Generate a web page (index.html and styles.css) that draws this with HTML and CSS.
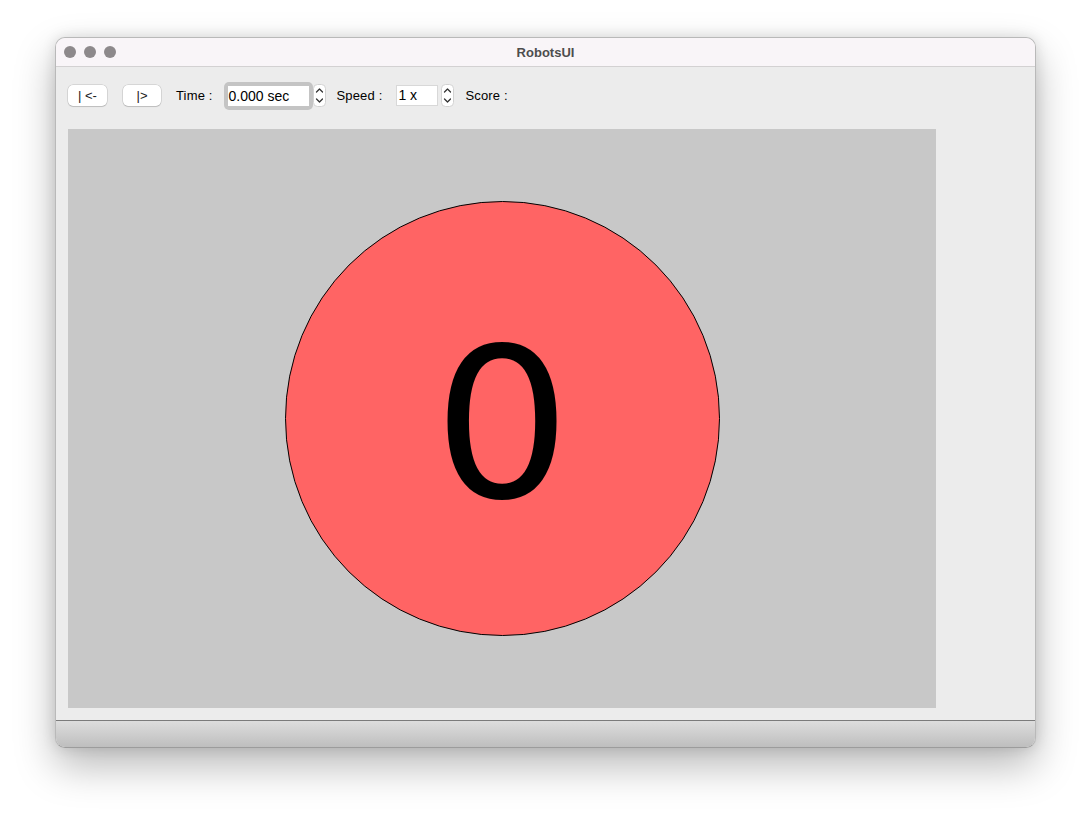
FILE: index.html
```html
<!DOCTYPE html>
<html>
<head>
<meta charset="utf-8">
<title>RobotsUI</title>
<link rel="stylesheet" href="styles.css">
</head>
<body>
<div class="window">
  <div class="titlebar">
    <div class="lights"><span class="light"></span><span class="light"></span><span class="light"></span></div>
    <div class="title">RobotsUI</div>
  </div>
  <div class="content">
    <div class="toolbar">
      <button class="btn btn-back">| &lt;-</button>
      <button class="btn btn-play">|&gt;</button>
      <span class="label label-time">Time :</span>
      <div class="focus-ring"><div class="field field-time">0.000 sec</div></div>
      <svg class="stepper" width="13" height="23" viewBox="0 0 13 23">
        <rect x="0.5" y="0.5" width="12" height="22" rx="4" fill="#fff" stroke="#d2d2d2"/>
        <path d="M3.5 8 L6.5 5 L9.5 8" fill="none" stroke="#333" stroke-width="1.3" stroke-linecap="round" stroke-linejoin="round"/>
        <path d="M3.5 15 L6.5 18 L9.5 15" fill="none" stroke="#333" stroke-width="1.3" stroke-linecap="round" stroke-linejoin="round"/>
      </svg>
      <span class="label label-speed">Speed :</span>
      <div class="field field-speed">1 x</div>
      <svg class="stepper stepper-speed" width="13" height="23" viewBox="0 0 13 23">
        <rect x="0.5" y="0.5" width="12" height="22" rx="4" fill="#fff" stroke="#d2d2d2"/>
        <path d="M3.5 8 L6.5 5 L9.5 8" fill="none" stroke="#333" stroke-width="1.3" stroke-linecap="round" stroke-linejoin="round"/>
        <path d="M3.5 15 L6.5 18 L9.5 15" fill="none" stroke="#333" stroke-width="1.3" stroke-linecap="round" stroke-linejoin="round"/>
      </svg>
      <span class="label label-score">Score :</span>
    </div>
    <div class="canvas">
      <div class="circle"><span class="digit">0</span></div>
    </div>
  </div>
  <div class="statusbar"></div>
</div>
</body>
</html>
```
FILE: styles.css
```css
html, body {
  margin: 0;
  padding: 0;
  background: #ffffff;
}

body {
  box-sizing: border-box;
  min-height: 821px;
  padding: 37px 0 74px 55px;
  font-family: "Liberation Sans", Arial, sans-serif;
}

.window {
  box-sizing: border-box;
  width: 981px;
  height: 711px;
  background: #ececec;
  border: 1px solid #b9b9b9;
  border-bottom-color: #9c9c9c;
  border-radius: 10px;
  overflow: hidden;
  box-shadow: 0 18px 40px rgba(0, 0, 0, 0.28), 0 0 14px rgba(0, 0, 0, 0.12);
  display: flex;
  flex-direction: column;
}

.titlebar {
  height: 28px;
  background: #f9f5f8;
  border-bottom: 1px solid #d3d1d2;
  display: flex;
  align-items: center;
  position: relative;
}

.lights {
  display: flex;
  gap: 8px;
  padding-left: 8px;
}

.light {
  width: 12px;
  height: 12px;
  border-radius: 50%;
  background: #8d898b;
}

.title {
  position: absolute;
  left: 0;
  right: 0;
  top: 0;
  bottom: 0;
  display: flex;
  align-items: center;
  justify-content: center;
  font-weight: bold;
  font-size: 13px;
  color: #4d4d4d;
}

.content {
  height: 653px;
  box-sizing: border-box;
  padding: 14px 12px 12px 12px;
  display: flex;
  flex-direction: column;
}

.toolbar {
  height: 29px;
  margin-bottom: 19px;
  display: flex;
  align-items: center;
  font-size: 13px;
  color: #000;
}

.label {
  letter-spacing: 0.15px;
}

.btn {
  box-sizing: border-box;
  height: 21px;
  padding: 0;
  background: #ffffff;
  border: none;
  border-radius: 5px;
  box-shadow: 0 0 0 0.5px rgba(0, 0, 0, 0.18), 0 1px 1px rgba(0, 0, 0, 0.12);
  font-family: "Liberation Sans", Arial, sans-serif;
  font-size: 13px;
  color: #1a1a1a;
}

.btn-back {
  width: 39px;
}

.btn-play {
  width: 38px;
  margin-left: 16px;
}

.label-time {
  margin-left: 15px;
}

.focus-ring {
  box-sizing: border-box;
  width: 89px;
  height: 28px;
  margin-left: 11px;
  padding: 4px;
  border-radius: 5px;
  background: #c4c4c4;
}

.field {
  box-sizing: border-box;
  background: #ffffff;
  font-size: 14px;
  line-height: 20px;
  color: #000;
}

.field-time {
  width: 81px;
  height: 20px;
  padding-left: 1px;
}

.stepper {
  display: block;
  margin-left: 0;
}

.label-speed {
  margin-left: 11px;
}

.field-speed {
  width: 42px;
  height: 21px;
  margin-left: 14px;
  padding-left: 1px;
  border: 1px solid #d8d8d8;
  line-height: 19px;
}

.stepper-speed {
  margin-left: 3px;
}

.label-score {
  margin-left: 11px;
}

.canvas {
  width: 868px;
  height: 579px;
  background: #c8c8c8;
  display: flex;
  align-items: center;
  justify-content: center;
}

.circle {
  box-sizing: border-box;
  width: 435px;
  height: 435px;
  border-radius: 50%;
  background: #ff6464;
  border: 1px solid #000;
  display: flex;
  align-items: center;
  justify-content: center;
}

.digit {
  font-family: "DejaVu Sans", sans-serif;
  font-size: 208px;
  line-height: 1;
  color: #000;
  margin-top: 12px;
  transform: scaleX(1.04);
}

.statusbar {
  flex: 1;
  border-top: 1px solid #7b7b7b;
  background: linear-gradient(#dddddd, #bebebe);
}
```
